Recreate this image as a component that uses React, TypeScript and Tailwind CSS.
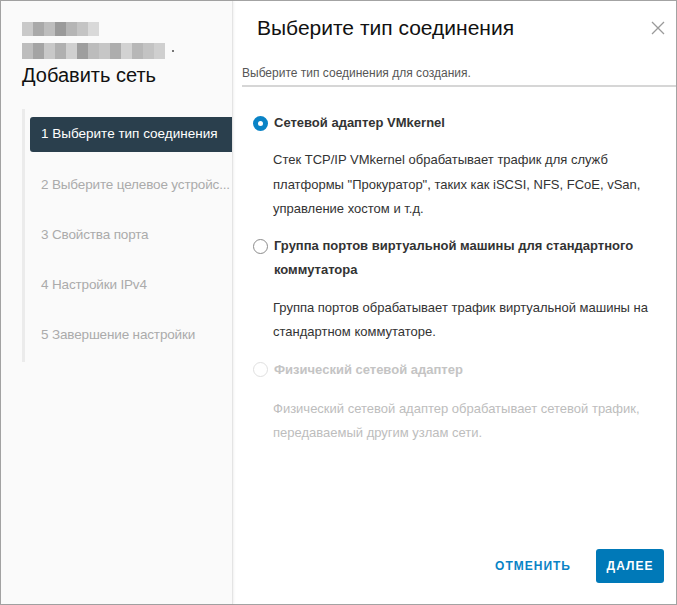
import React from "react";

const mosaicTop = ["#c9c9c9", "#a9a9a9", "#bdbdbd", "#9a9a9a", "#b5b5b5", "#c4c4c4", "#d9d9d9"];
const mosaicBottom = ["#bdbdbd", "#a4a4a4", "#c8c8c8", "#b0b0b0", "#d0d0d0", "#9e9e9e", "#bcbcbc", "#c6c6c6", "#adadad", "#d2d2d2", "#b7b7b7", "#c3c3c3", "#cfcfcf"];

const steps = [
  "2 Выберите целевое устройс...",
  "3 Свойства порта",
  "4 Настройки IPv4",
  "5 Завершение настройки",
];

function Radio({ checked, disabled }: { checked?: boolean; disabled?: boolean }) {
  if (checked) {
    return (
      <span className="w-[15px] h-[15px] rounded-full bg-[#0a83c6] flex items-center justify-center shrink-0">
        <span className="w-[5px] h-[5px] rounded-full bg-white" />
      </span>
    );
  }
  return (
    <span
      className={
        disabled
          ? "block w-[15px] h-[15px] rounded-full border border-[#e0e0e0] bg-white shrink-0"
          : "block w-[15px] h-[15px] rounded-full border border-[#8c8c8c] bg-white shrink-0"
      }
    />
  );
}

export default function App() {
  return (
    <div
      className="w-[677px] h-[605px] border border-[#a3a3a3] flex bg-white text-[#313131]"
      style={{ fontFamily: "'Liberation Sans', Arial, sans-serif" }}
    >
      {/* left wizard nav */}
      <div className="w-[232px] shrink-0 bg-[#fafafa] border-r border-[#e4e4e4] shadow-[1px_0_2px_rgba(0,0,0,0.06)] flex flex-col">
        <div className="pl-[21px] pt-[21px]">
          <div className="flex h-[14px]">
            {mosaicTop.map((c, i) => (
              <span key={i} className="w-[11px] h-[14px]" style={{ backgroundColor: c }} />
            ))}
          </div>
          <div className="flex h-[16px] mt-[7px] items-center">
            {mosaicBottom.map((c, i) => (
              <span key={i} className="w-[11px] h-[16px]" style={{ backgroundColor: c }} />
            ))}
            <span className="w-[2px] h-[2px] bg-[#777] ml-[7px]" />
          </div>
          <h1 className="text-[20px] leading-[24px] text-[#111] mt-[4px]">Добавить сеть</h1>
        </div>

        <div className="ml-[21px] mt-[22px] border-l-[3px] border-[#ebebeb] pl-[5px] pt-[8px] pb-[2px] flex flex-col">
          <div className="h-[35px] bg-[#2a3f4d] rounded-l-[3px] flex items-center pl-[11px] text-white text-[13.5px]">
            1 Выберите тип соединения
          </div>
          <div className="mt-[8px] flex flex-col">
            {steps.map((s) => (
              <div key={s} className="h-[50px] leading-[50px] pl-[11px] text-[13.5px] text-[#ababab] whitespace-nowrap tracking-[-0.15px]">
                {s}
              </div>
            ))}
          </div>
        </div>
      </div>

      {/* right content */}
      <div className="flex-1 flex flex-col">
        <div className="flex items-center justify-between pl-[24px] pr-[10px] h-[54px]">
          <h2 className="text-[21px] text-[#111]">Выберите тип соединения</h2>
          <svg width="16" height="16" viewBox="0 0 16 16" className="text-[#9a9a9a]">
            <path d="M2 2 L14 14 M14 2 L2 14" stroke="currentColor" strokeWidth="1.3" fill="none" />
          </svg>
        </div>
        <div className="ml-[9px] mt-[9px] border-b-2 border-[#d6d6d6] pb-[3px] text-[12px] text-[#565656]">
          Выберите тип соединения для создания.
        </div>

        <div className="pl-[20px] pr-[20px] pt-[28px] flex flex-col">
          <label className="flex items-center gap-[6px] h-[16px]">
            <Radio checked />
            <span className="text-[13px] font-bold text-[#333]">Сетевой адаптер VMkernel</span>
          </label>
          <p className="pl-[20px] mt-[17px] text-[13px] leading-[24.5px] text-[#333]">
            Стек TCP/IP VMkernel обрабатывает трафик для служб
            <br />
            платформы "Прокуратор", таких как iSCSI, NFS, FCoE, vSan,
            <br />
            управление хостом и т.д.
          </p>

          <label className="flex items-start gap-[6px] mt-[12px]">
            <span className="pt-[5px] shrink-0">
              <Radio />
            </span>
            <span className="text-[13px] font-bold leading-[24px] text-[#333]">
              Группа портов виртуальной машины для стандартного
              <br />
              коммутатора
            </span>
          </label>
          <p className="pl-[20px] mt-[14px] text-[13px] leading-[24px] text-[#333]">
            Группа портов обрабатывает трафик виртуальной машины на
            <br />
            стандартном коммутаторе.
          </p>

          <label className="flex items-center gap-[6px] mt-[14px] h-[24px]">
            <Radio disabled />
            <span className="text-[13px] font-bold text-[#c4c4c4]">Физический сетевой адаптер</span>
          </label>
          <p className="pl-[20px] mt-[15px] text-[13px] leading-[24px] text-[#bdbdbd]">
            Физический сетевой адаптер обрабатывает сетевой трафик,
            <br />
            передаваемый другим узлам сети.
          </p>
        </div>

        <div className="mt-auto flex items-center justify-end gap-[25px] pr-[12px] pb-[21px]">
          <button className="text-[12px] tracking-[1px] text-[#0a83c6] font-semibold">ОТМЕНИТЬ</button>
          <button className="h-[34px] w-[68px] rounded-[3px] bg-[#0079b8] text-white text-[12px] tracking-[1px] font-semibold">
            ДАЛЕЕ
          </button>
        </div>
      </div>
    </div>
  );
}
